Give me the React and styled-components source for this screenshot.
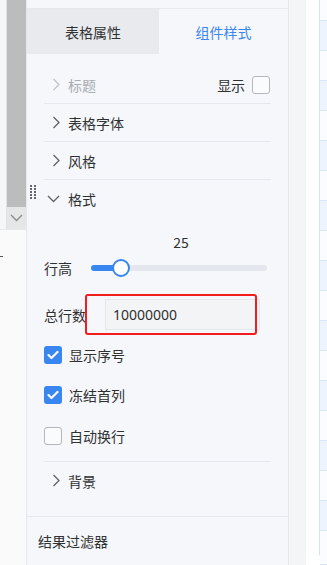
import React from "react";
import styled, { createGlobalStyle } from "styled-components";

const GlobalStyle = createGlobalStyle`
	html, body {
		margin: 0;
		padding: 0;
		background: #ffffff;
	}
	body {
		font-family: "Noto Sans CJK SC", "Noto Sans", sans-serif;
		font-size: 14px;
		color: #303133;
	}
`;

const Page = styled.div`
	display: flex;
	width: 327px;
	height: 565px;
	overflow: hidden;
`;

const Gutter = styled.div`
	width: 26px;
	display: flex;
	flex-direction: column;
	background: #fafafa;
`;
const GutterTop = styled.div`
	height: 229px;
	display: flex;
	background: #f5f6f8;
	border-bottom: 1px solid #e6e8eb;
`;
const ScrollTrack = styled.div`
	margin-left: 6px;
	width: 19px;
	display: flex;
	flex-direction: column;
	border-left: 1px solid #e2e2e2;
`;
const ScrollThumb = styled.div`
	flex: 1;
	background: #bcbcbc;
`;
const ScrollButton = styled.div`
	height: 22px;
	background: #e6e6e6;
	display: flex;
	align-items: center;
	justify-content: center;
`;
const Dash = styled.div`
	margin-top: 26px;
	width: 3px;
	height: 1px;
	background: #555;
`;

const Panel = styled.div`
	width: 262px;
	border-left: 1px solid #e4e7ed;
	border-right: 1px solid #e4e7ed;
	background: #f5f7fa;
	display: flex;
	flex-direction: column;
	position: relative;
`;
const TopStrip = styled.div`
	height: 9px;
	border-bottom: 1px solid #e6e8eb;
`;
const Tabs = styled.div`
	display: flex;
	height: 48px;
`;
const Tab = styled.div`
	width: ${(p) => (p.$grow ? "auto" : "132px")};
	flex: ${(p) => (p.$grow ? 1 : "none")};
	display: flex;
	align-items: center;
	justify-content: center;
	background: ${(p) => (p.$active ? "transparent" : "#e9eaed")};
	color: ${(p) => (p.$active ? "#3a86f0" : "#303133")};
	font-size: 14px;
`;
const Body = styled.div`
	padding: 12px 17px 17px 17px;
	border-bottom: 1px solid #e4e7ed;
`;
const Header = styled.div`
	height: 37px;
	display: flex;
	align-items: center;
	border-bottom: ${(p) => (p.$open ? "none" : "1px solid #e4e7ed")};
	color: ${(p) => (p.$muted ? "#a8abb2" : "#303133")};
`;
const Arrow = styled.span`
	width: 24px;
	display: flex;
	align-items: center;
	justify-content: ${(p) => (p.$down ? "flex-start" : "center")};
	padding-left: ${(p) => (p.$down ? "3px" : "0")};
	box-sizing: border-box;
`;
const HeaderTitle = styled.span`
	flex: 1;
`;
const ShowToggle = styled.label`
	display: flex;
	align-items: center;
	gap: 7px;
	color: #303133;
	margin-right: 1px;
`;
const Box = styled.span`
	width: 18px;
	height: 18px;
	box-sizing: border-box;
	border-radius: 3px;
	border: ${(p) => (p.$checked ? "none" : "1.5px solid #b4b7bd")};
	background: ${(p) => (p.$checked ? "#3a86f0" : "#fafbfc")};
	display: flex;
	align-items: center;
	justify-content: center;
`;
const Content = styled.div`
	display: flex;
	flex-direction: column;
`;
const ValueLabel = styled.div`
	margin-top: 15px;
	height: 20px;
	line-height: 20px;
	padding-left: 47px;
	text-align: center;
	font-size: 14px;
	color: #303133;
`;
const SliderRow = styled.div`
	margin-top: 6px;
	height: 20px;
	display: flex;
	align-items: center;
`;
const Label = styled.span`
	width: ${(p) => p.$w || "47px"};
	flex: none;
	color: #303133;
`;
const Track = styled.div`
	position: relative;
	width: 176px;
	height: 6px;
	border-radius: 3px;
	background: #e4e7ed;
`;
const Fill = styled.div`
	height: 100%;
	border-radius: 3px;
	background: #3a86f0;
`;
const Thumb = styled.div`
	position: absolute;
	top: 50%;
	width: 18px;
	height: 18px;
	box-sizing: border-box;
	border-radius: 50%;
	background: #fff;
	border: 2px solid #3a86f0;
	transform: translate(-50%, -50%);
`;
const FieldRow = styled.div`
	margin-top: 21px;
	height: 31px;
	display: flex;
	align-items: center;
	position: relative;
`;
const Input = styled.div`
	width: 155px;
	height: 31px;
	box-sizing: border-box;
	border: 1px solid #e4e7ed;
	background: #f3f4f6;
	display: flex;
	align-items: center;
	padding-left: 7px;
	font-family: "Noto Sans", "Noto Sans CJK SC", sans-serif;
	font-size: 14px;
	color: #303133;
`;
const Highlight = styled.div`
	position: absolute;
	left: 41px;
	top: -5px;
	width: 172px;
	height: 41px;
	box-sizing: border-box;
	border: 2px solid #f31d1d;
	border-radius: 3px;
	pointer-events: none;
`;
const CheckRow = styled.label`
	margin-top: ${(p) => p.$mt || "20px"};
	height: 20px;
	display: flex;
	align-items: center;
	gap: 7px;
	color: #303133;
`;
const Divider = styled.div`
	margin-top: 15px;
	border-top: 1px solid #e4e7ed;
`;
const Filter = styled.div`
	padding: 14px 11px;
	color: #303133;
`;
const Handle = styled.div`
	position: absolute;
	left: 3px;
	top: 185px;
	display: grid;
	grid-template-columns: repeat(2, 2px);
	gap: 1px 2px;
`;
const Dot = styled.span`
	width: 2px;
	height: 2px;
	background: #60656e;
`;

const Spacer = styled.div`
	width: 17px;
	background: #f4f5f7;
`;
const White = styled.div`
	width: 13px;
	background: #fff;
`;
const Table = styled.div`
	width: 7px;
	height: 555px;
	border-left: 1px solid #d3e1f7;
	display: flex;
	flex-direction: column;
`;
const Cell = styled.div`
	height: ${(p) => p.$h}px;
	flex: none;
	box-sizing: border-box;
	border-bottom: 1px solid #d9e5f8;
	background: ${(p) => (p.$alt ? "#eef4fd" : "#fafcff")};
`;

const Chevron = ({ down, color = "#606266" }) =>
	down ? (
		<svg width="13" height="8" viewBox="0 0 13 8">
			<polyline points="1,1 6.5,6.5 12,1" fill="none" stroke={color} strokeWidth="1.3" />
		</svg>
	) : (
		<svg width="8" height="13" viewBox="0 0 8 13">
			<polyline points="1.5,1 7,6.5 1.5,12" fill="none" stroke={color} strokeWidth="1.3" />
		</svg>
	);

const Check = () => (
	<svg width="12" height="10" viewBox="0 0 12 10">
		<polyline points="1.5,5 4.5,8 10.5,2" fill="none" stroke="#fff" strokeWidth="2.2" strokeLinecap="round" strokeLinejoin="round" />
	</svg>
);

function App() {
	const value = 25;
	const pct = 17;
	const rows = [21, 30, 30, 30, 30, 30, 30, 30, 30, 30, 30, 30, 30, 30, 30, 30, 30, 30, 34];

	return (
		<>
			<GlobalStyle />
			<Page>
				<Gutter>
					<GutterTop>
						<ScrollTrack>
							<ScrollThumb />
							<ScrollButton>
								<Chevron down color="#8a8a8a" />
							</ScrollButton>
						</ScrollTrack>
					</GutterTop>
					<Dash />
				</Gutter>

				<Panel>
					<TopStrip />
					<Tabs>
						<Tab>表格属性</Tab>
						<Tab $grow $active>组件样式</Tab>
					</Tabs>
					<Body>
						<Header $muted>
							<Arrow><Chevron color="#c0c4cc" /></Arrow>
							<HeaderTitle>标题</HeaderTitle>
							<ShowToggle>
								显示
								<Box />
							</ShowToggle>
						</Header>
						<Header>
							<Arrow><Chevron /></Arrow>
							<HeaderTitle>表格字体</HeaderTitle>
						</Header>
						<Header>
							<Arrow><Chevron /></Arrow>
							<HeaderTitle>风格</HeaderTitle>
						</Header>
						<Header $open>
							<Arrow $down><Chevron down /></Arrow>
							<HeaderTitle>格式</HeaderTitle>
						</Header>
						<Content>
							<ValueLabel>{value}</ValueLabel>
							<SliderRow>
								<Label>行高</Label>
								<Track>
									<Fill style={{ width: `${pct}%` }} />
									<Thumb style={{ left: `${pct}%` }} />
								</Track>
							</SliderRow>
							<FieldRow>
								<Label $w="61px">总行数</Label>
								<Input>10000000</Input>
								<Highlight />
							</FieldRow>
							<CheckRow $mt="15px">
								<Box $checked><Check /></Box>
								显示序号
							</CheckRow>
							<CheckRow>
								<Box $checked><Check /></Box>
								冻结首列
							</CheckRow>
							<CheckRow $mt="21px">
								<Box />
								自动换行
							</CheckRow>
						</Content>
						<Divider />
						<Header $open>
							<Arrow><Chevron /></Arrow>
							<HeaderTitle>背景</HeaderTitle>
						</Header>
					</Body>
					<Filter>结果过滤器</Filter>
					<Handle>
						{Array.from({ length: 10 }).map((_, i) => (
							<Dot key={i} />
						))}
					</Handle>
				</Panel>

				<Spacer />
				<White />
				<Table>
					{rows.map((h, i) => (
						<Cell key={i} $h={h} $alt={i % 2 === 1} />
					))}
				</Table>
			</Page>
		</>
	);
}

export default App;
